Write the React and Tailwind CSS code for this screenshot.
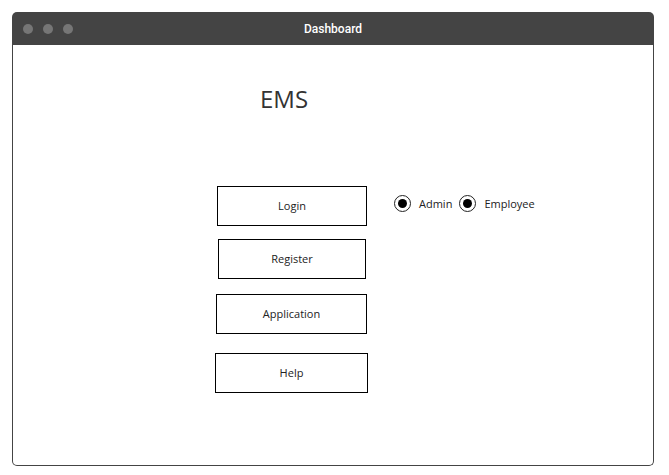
export default function App() {
  const font = { fontFamily: '"Open Sans", "Noto Sans", sans-serif' };
  const Radio = ({ label }) => (
    <div className="flex items-center">
      <span className="w-[17px] h-[17px] rounded-full border-[1.5px] border-[#222] flex items-center justify-center bg-white">
        <span className="w-[9px] h-[9px] rounded-full bg-black"></span>
      </span>
      <span className="ml-[8px] text-[11px] text-[#222] leading-none">{label}</span>
    </div>
  );
  return (
    <div className="w-[669px] h-[475px] bg-white pt-[12px] pl-[12px]" style={font}>
      <div className="w-[642px] h-[454px] flex flex-col">
        <div className="h-[33px] bg-[#444444] rounded-t-[5px] flex items-center relative">
          <div className="flex gap-[10px] pl-[11px]">
            <span className="w-[10px] h-[10px] rounded-full bg-[#767676]"></span>
            <span className="w-[10px] h-[10px] rounded-full bg-[#767676]"></span>
            <span className="w-[10px] h-[10px] rounded-full bg-[#767676]"></span>
          </div>
          <div className="absolute inset-0 flex items-center justify-center text-white text-[12px] font-medium" style={{ fontFamily: 'Roboto, "Open Sans", sans-serif' }}>
            Dashboard
          </div>
        </div>
        <div className="flex-1 border border-t-0 border-[#444] rounded-b-[5px] flex flex-col">
          <div className="pl-[247px] pt-[38px] text-[24px] leading-[32px] text-[#333]">EMS</div>
          <div className="flex flex-row mt-[71px] pl-[202px]">
            <div className="flex flex-col">
              <div className="ml-[2px] w-[150px] h-[40px] border border-black flex items-center justify-center text-[11px] text-[#222]">Login</div>
              <div className="ml-[3px] mt-[13px] w-[148px] h-[40px] border border-black flex items-center justify-center text-[11px] text-[#222]">Register</div>
              <div className="ml-[1px] mt-[15px] w-[151px] h-[40px] border border-black flex items-center justify-center text-[11px] text-[#222]">Application</div>
              <div className="mt-[19px] w-[153px] h-[40px] border border-black flex items-center justify-center text-[11px] text-[#222]">Help</div>
            </div>
            <div className="flex gap-[7px] ml-[26px] mt-[9px] h-[17px]">
              <Radio label="Admin" />
              <Radio label="Employee" />
            </div>
          </div>
        </div>
      </div>
    </div>
  );
}
